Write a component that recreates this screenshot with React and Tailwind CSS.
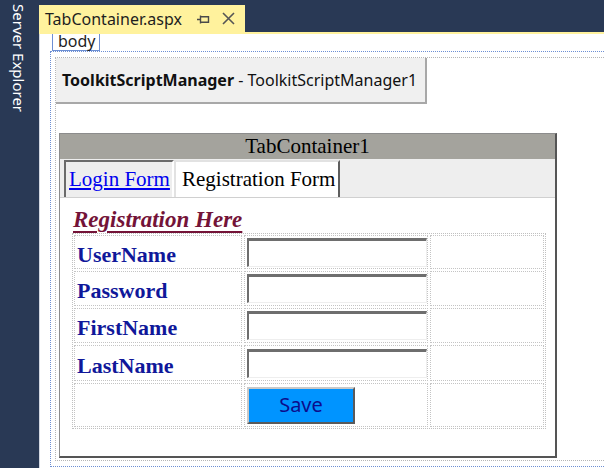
// App.jsx
import React from 'react';

const rows = ['UserName', 'Password', 'FirstName', 'LastName'];

const PinIcon = () => (
  <svg width="13" height="9" viewBox="0 0 13 9" fill="none" stroke="#4a4a4a" strokeWidth="1.4">
    <path d="M0 4.5h3.5M3.5 0.5v8M3.5 1.8h8v5.4h-8" />
  </svg>
);

const CloseIcon = () => (
  <svg width="13" height="13" viewBox="0 0 13 13" fill="none" stroke="#555" strokeWidth="1.6">
    <path d="M1 1l11 11M12 1L1 12" />
  </svg>
);

const App = () => {
  return (
    <div className="flex w-[604px] h-[468px] overflow-hidden bg-white font-['Noto_Sans',sans-serif]">
      {/* side tool strip */}
      <aside className="w-[39px] shrink-0 bg-[#293955]">
        <div className="ml-[11px] mt-[4px] [writing-mode:vertical-rl] text-[15px] leading-[16px] text-white">
          Server Explorer
        </div>
      </aside>

      <div className="flex-1 min-w-0 flex flex-col">
        {/* document tab well */}
        <div className="bg-[#293955] pt-[5px]">
          <div className="flex items-center w-[206px] h-[27px] bg-[#fff29d] pl-[6px] text-[16px] text-[#1e1e1e]">
            <span>TabContainer.aspx</span>
            <span className="ml-[15px] mt-[1px]"><PinIcon /></span>
            <span className="ml-[12px]"><CloseIcon /></span>
          </div>
          <div className="h-[2px] bg-[#fff29d]" />
        </div>

        {/* design surface */}
        <div className="flex-1 border-l border-[#d3d8e2] pl-[10px]">
          <div className="ml-[2px] w-[48px] h-[17px] border-x border-b border-[#6d8fd3] pl-[5px] text-[16px] leading-[14px] text-[#1e1e1e]">
            body
          </div>
          <div className="h-[416px] border-l border-t border-b border-dotted border-[#6d8fd3]">
            <div className="ml-[4px] mt-[5px] h-[404px] border-l border-t border-b border-dotted border-[#b5b5b5]">
              <div className="flex items-center w-[371px] h-[46px] bg-[#f0f0f0] border-r-2 border-b-2 border-[#a8a8a8] pl-[6px] text-[16px] text-[#111]">
                <span className="font-bold">ToolkitScriptManager</span>
                <span>&nbsp;- ToolkitScriptManager1</span>
              </div>

              {/* TabContainer */}
              <div className="ml-[3px] mt-[29px] w-[498px] h-[325px] flex flex-col border-t border-l border-[#8c8c8c] border-r-2 border-b-2 border-r-[#555] border-b-[#555] font-['Liberation_Serif',serif]">
                <div className="h-[25px] flex items-center justify-center bg-[#a4a39d] text-[21px] text-black">
                  TabContainer1
                </div>
                <div className="h-[39px] bg-[#eeeeee] pt-[1px] pl-[4px] border-b border-[#d0d0d0] flex">
                  <div className="h-[37px] w-[110px] flex items-center pl-[3px] border-t-2 border-l-2 border-[#6b6b6b] border-r-2 border-r-white text-[21px]">
                    <a href="#" className="text-[#0000ee] underline">Login Form</a>
                  </div>
                  <div className="h-[37px] w-[166px] flex items-center pl-[6px] bg-white border-t-2 border-l-2 border-[#e2e2e2] border-r-2 border-r-[#5e5e5e] text-[21px] text-black">
                    Registration Form
                  </div>
                </div>

                <div className="flex-1 bg-white pl-[12px] pt-[10px]">
                  <div className="pl-[1px] h-[25px] leading-[24px] text-[23px] font-bold italic text-[#741338] underline underline-offset-[4px]">
                    Registration Here
                  </div>
                  <div className="w-[474px] h-[196px] border border-dotted border-[#c0c0c0] p-[1px] grid grid-cols-[168px_184px_1fr] grid-rows-[34px_35px_35px_36px_1fr] gap-[2px]">
                    {rows.map((label) => (
                      <React.Fragment key={label}>
                        <div className="border border-dotted border-[#c4c4c4] flex items-center pl-[2px] pt-[4px] text-[22px] font-bold text-[#10189a]">
                          {label}
                        </div>
                        <div className="border border-dotted border-[#c4c4c4] flex items-center pl-[2px]">
                          <div className="w-[180px] h-[29px] bg-white border-t-[3px] border-l-2 border-[#6e6e6e] border-r border-b border-r-[#eeeeee] border-b-[#eeeeee]" />
                        </div>
                        <div className="border border-dotted border-[#c4c4c4]" />
                      </React.Fragment>
                    ))}
                    <div className="border border-dotted border-[#c4c4c4]" />
                    <div className="border border-dotted border-[#c4c4c4] flex items-center pl-[2px]">
                      <button className="w-[108px] h-[37px] bg-[#0094ff] border-2 border-[#c8c8c8] border-r-[#5a5a5a] border-b-[#5a5a5a] font-['Noto_Sans',sans-serif] text-[20px] leading-none text-[#0c0c8c]">
                        Save
                      </button>
                    </div>
                    <div className="border border-dotted border-[#c4c4c4]" />
                  </div>
                </div>
              </div>
            </div>
          </div>
        </div>
      </div>
    </div>
  );
};

export default App;
